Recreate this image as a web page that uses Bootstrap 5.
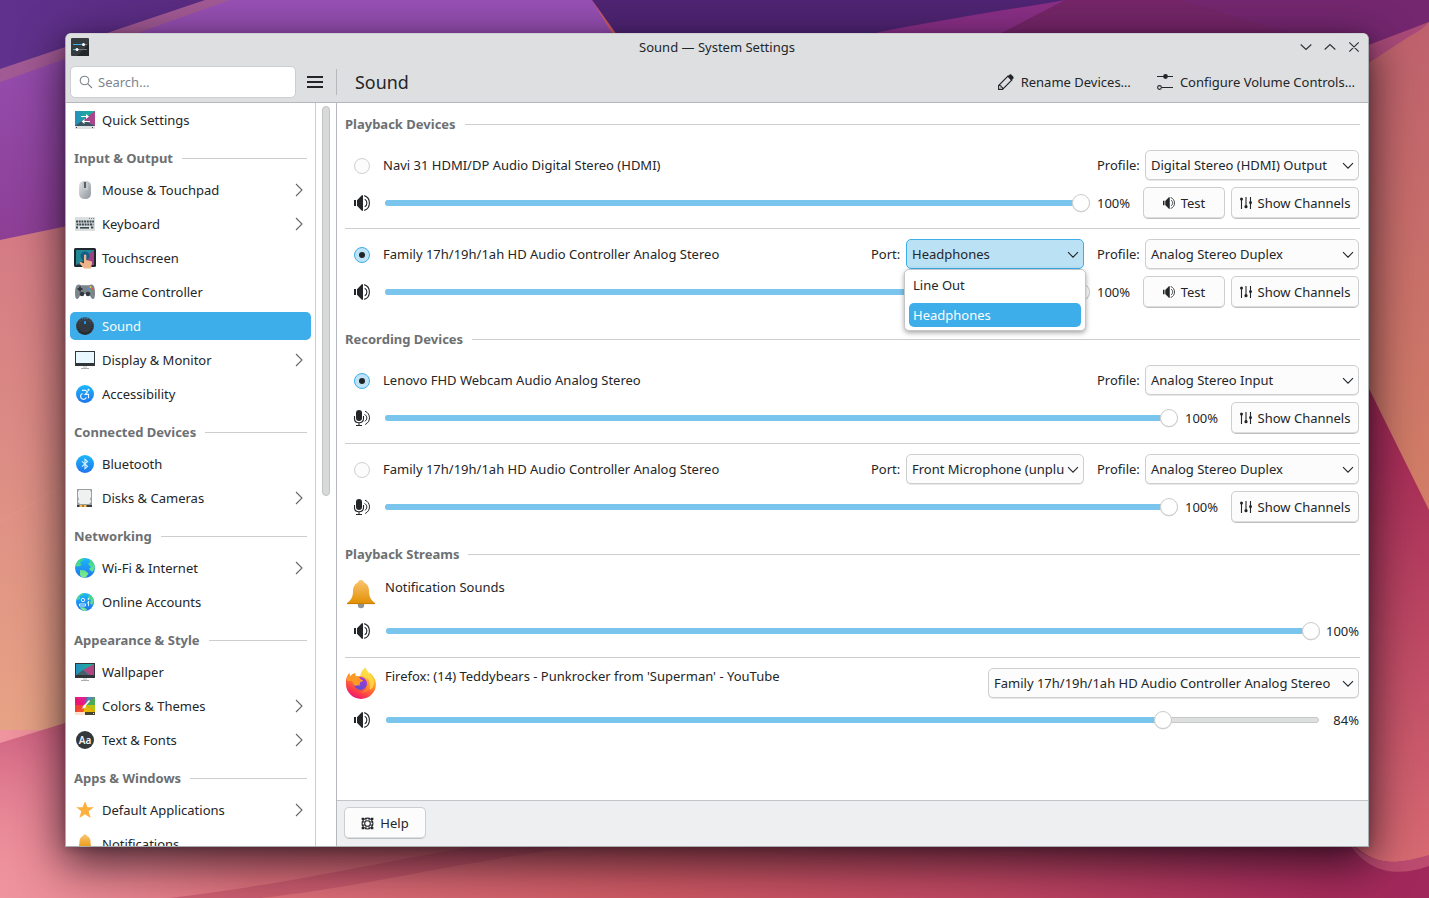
<!DOCTYPE html>
<html lang="en">
<head>
<meta charset="utf-8">
<title>Sound — System Settings</title>
<meta name="viewport" content="width=device-width, initial-scale=1">
<link href="https://cdn.jsdelivr.net/npm/bootstrap@5.3.0/dist/css/bootstrap.min.css" rel="stylesheet">
<style>
  html, body { height: 100%; }
  body { font-family: "Noto Sans", sans-serif; font-size: 13px; line-height: 18px; color: #232629; overflow: hidden; background: #b5506a; }
  svg { display: block; flex: none; }
  .wallpaper { position: absolute; inset: 0; width: 1429px; height: 898px; }
  .desktop { padding: 33px 0 0 65px; }
  .app-window { position: relative; width: 1304px; height: 814px; border: 1px solid #a9acb0; border-top-color: #cfd0d3; border-radius: 6px 6px 0 0; background: #fff; box-shadow: 0 14px 44px 2px rgba(10,4,14,.72), 0 2px 8px rgba(10,4,14,.2); }
  .title-bar { height: 27px; position: relative; padding-bottom: 1px; }
  .window-head { background: #dedfe1; border-bottom: 1px solid #b4b7bb; border-radius: 5px 5px 0 0; height: 69px; }
  .tool-bar { height: 41px; }
  .search-box { width: 226px; height: 32px; background: #fff; border: 1px solid #cdced0; border-radius: 5px; padding-left: 8px; gap: 5px; color: #7b8690; }
  .head-sep { width: 1px; height: 26px; background: #b6b9bd; margin-left: 13px; }
  .page-title { font-size: 17.9px; line-height: 26px; margin-left: 18px; }
  .tool-actions { padding-right: 13px; gap: 26px; }
  .tool-action { gap: 7px; }
  .side-list { width: 250px; height: 743px; border-right: 1px solid #cbcccf; overflow: hidden; padding: 0 4px; }
  .side-item { height: 28px; margin: 3px 0; padding: 0 8px 0 4px; border-radius: 5px; gap: 6px; flex: none; }
  .side-item.active { background: #3daee9; color: #fcfcfc; }
  .side-head { height: 36px; padding: 6px 4px 0; gap: 9px; flex: none; }
  .head-text { font-weight: 700; color: #6d7072; }
  .rule { height: 1px; background: #cbcdd0; flex: 1 1 0; }
  .scroll-lane { width: 21px; border-right: 1px solid #b4b7bb; padding: 3px 0 0 6px; }
  .scroll-thumb { width: 8px; height: 390px; border-radius: 4px; background: #d8dad9; border: 1px solid #c1c3c3; }
  .page-body { height: 697px; padding: 0 8px; }
  .page-foot { height: 46px; border-top: 1px solid #c3c5c8; background: #eeeff1; padding: 6px 7px; }
  .sect-head { height: 42px; gap: 9px; }
  .dev-group { padding: 5px 0 10px; }
  .dev-row { height: 30px; padding-right: 1px; }
  .vol-row { height: 32px; margin-top: 7px; padding-right: 1px; }
  .dev-sep { height: 1px; background: #cbcdd0; margin: 9px 0 10px; }
  .btn-k { --bs-btn-padding-x: 0; --bs-btn-padding-y: 0; --bs-btn-font-size: 13px; --bs-btn-line-height: 18px; --bs-btn-color: #232629; --bs-btn-bg: #fcfcfc; --bs-btn-border-color: #cdcecf; --bs-btn-border-radius: 5px; height: 32px; border-bottom-color: #bfc0c2; box-shadow: inset 0 -1px 0 #dcddde; display: flex; align-items: center; justify-content: center; gap: 6px; }
  .combo { height: 30px; box-shadow: 0 1px 0 #e6e7e8; border-bottom-color: #cdcecf; padding: 0 4px 0 5px; gap: 0; text-align: left; }
  .combo .combo-text { flex: 1 1 0; white-space: nowrap; }
  .combo svg { margin-top: 1px; }
  .combo.open { background: #bbe1f5; border-color: #3daee9; box-shadow: none; }
  .w-profile { width: 214px; } .w-port { width: 178px; } .w-target { width: 371px; }
  .w-test { width: 82px; } .w-chan { width: 128px; }
  .lbl-port { width: 35px; } .lbl-profile { width: 48px; }
  .w-port + .lbl-profile, .port-wrap + .lbl-profile { margin-left: 13px; }
  .radio-k { width: 16px; height: 16px; border-radius: 50%; border: 1px solid #cfd0d1; background: #fcfcfc; margin: 1px 13px 0 9px; flex: none; display: flex; align-items: center; justify-content: center; }
  .radio-k.on { border-color: #3daee9; background: #bfe3f6; }
  .radio-k.on::after { content: ""; width: 6px; height: 6px; border-radius: 50%; background: #1f2427; }
  .slider { height: 18px; position: relative; display: flex; align-items: center; flex: 1 1 0; }
  .slider .groove { height: 6px; width: 100%; border-radius: 3px; background: #dedfdf; border: 1px solid #c6c7c8; }
  .slider .filled { position: absolute; left: 0; top: 6px; height: 6px; border-radius: 3px; background: #7ac5ee; }
  .slider .knob { position: absolute; top: 0; width: 18px; height: 18px; margin-left: -9px; border-radius: 50%; background: #fff; border: 1px solid #cacbcc; box-shadow: 0 .5px 0 #dcdcdc; }
  .vol-icon { margin: 0 15px 0 9px; }
  .stream-vol .vol-icon { margin-right: 16px; }
  .pct { width: 46px; margin-left: 7px; }
  .stream-vol .pct { width: 33px; text-align: right; white-space: nowrap; }
  .w-test + .w-chan { margin-left: 6px; }
  .port-wrap { position: relative; }
  .port-menu { position: absolute; left: -2px; top: 30px; width: 182px; height: 62px; z-index: 5; background: #fff; border: 1px solid #c4c7c9; border-radius: 5px; box-shadow: 0 2px 5px rgba(0,0,0,.35); }
  .port-item { height: 24px; margin: 3px 4px; padding: 0 4px; border-radius: 5px; line-height: 24px; }
  .port-item + .port-item { margin-top: 6px; }
  .port-item.active { background: #3daee9; color: #fcfcfc; }
  .stream-group { padding-top: 3px; }
  .stream-row { height: 32px; padding-right: 1px; gap: 8px; }
  .stream-row .combo { margin-top: 1px; }
  .stream-vol { height: 24px; margin-top: 9px; padding-right: 1px; }
  .stream-group .dev-sep { margin: 14px 0 9px; }
</style>
</head>
<body>
<svg width="0" height="0" class="position-absolute">
  <defs>
    <symbol id="arrow-down" viewBox="0 0 12 8"><path d="M1 1.200 6 6.200l5-5" fill="none" stroke="currentColor" stroke-width="1.100"/></symbol>
    <symbol id="arrow-right" viewBox="0 0 8 14"><path d="M1 1l6 6-6 6" fill="none" stroke="#62666a" stroke-width="1.100"/></symbol>
    <symbol id="speaker" viewBox="0 0 16 16"><path d="M0 5h2v6H0zM3 5.200 7.800.3H9v15.400H7.800L3 10.800z" fill="#232629"/><path d="M10.200.6c3 .9 5.200 4 5.200 7.400s-2.200 6.500-5.200 7.400M10.700 4.300c1.600.8 2.200 2.200 2.200 3.700s-.6 2.900-2.200 3.700" fill="none" stroke="#232629" stroke-width="1.100"/></symbol>
    <symbol id="mic" viewBox="0 0 16 16"><rect x="2" y="0" width="6" height="11" rx="3" fill="#232629"/><path d="M.5 6v2.500c0 2.500 1.900 4.200 4.500 4.200s4.500-1.700 4.500-4.200V6M5 12.500V15M2 15.500h6" fill="none" stroke="#232629" stroke-width="1.100"/><path d="M11 1.200c2.800 1 4.500 3.800 4.500 6.600s-1.600 5.400-4.300 6.700M10.500 4.500c1.500.7 2.300 1.900 2.300 3.400s-.7 2.700-2 3.400" fill="none" stroke="#232629" stroke-width="1"/></symbol>
    <symbol id="channels" viewBox="0 0 12 12"><path d="M1.500 1v11M6 0v11M10.500 0v12" stroke="#232629" stroke-width="1.100"/><circle cx="1.500" cy="2" r="1.500" fill="#232629"/><circle cx="6" cy="9.700" r="1.600" fill="#232629"/><circle cx="10.500" cy="5.500" r="1.500" fill="#232629"/></symbol>
    <linearGradient id="g-gold" x1="0" y1="0" x2="0" y2="1"><stop offset="0" stop-color="#fdc470"/><stop offset="1" stop-color="#e08f00"/></linearGradient>
    <linearGradient id="g-blue" x1="0" y1="0" x2="0" y2="1"><stop offset="0" stop-color="#1cb8fb"/><stop offset="1" stop-color="#1f74ec"/></linearGradient>
    <linearGradient id="g-green" x1="0" y1="0" x2="0" y2="1"><stop offset="0" stop-color="#37d28d"/><stop offset="1" stop-color="#83ea8d"/></linearGradient>
    <linearGradient id="g-grey" x1="0" y1="0" x2="1" y2="1"><stop offset="0" stop-color="#e3e5e7"/><stop offset="1" stop-color="#8d949b"/></linearGradient>
    <linearGradient id="g-dark" x1="0" y1="0" x2="0" y2="1"><stop offset="0" stop-color="#4a525a"/><stop offset="1" stop-color="#272c31"/></linearGradient>
    <linearGradient id="g-teal" x1="0" y1="0" x2="1" y2="0"><stop offset="0" stop-color="#2490bd"/><stop offset="1" stop-color="#1bb68f"/></linearGradient>
    <linearGradient id="g-fox" x1=".8" y1="0" x2=".3" y2="1"><stop offset="0" stop-color="#ffe94f"/><stop offset=".3" stop-color="#ffb62f"/><stop offset=".6" stop-color="#ff6a35"/><stop offset=".85" stop-color="#fb2f52"/><stop offset="1" stop-color="#e31587"/></linearGradient>
    <linearGradient id="g-foxin" x1=".7" y1="0" x2=".3" y2="1"><stop offset="0" stop-color="#a636dd"/><stop offset="1" stop-color="#5a4fd0"/></linearGradient>
    <symbol id="bell" viewBox="0 0 32 32"><circle cx="16" cy="27" r="3.200" fill="#8e9399"/><path d="M16 2c-1.700 0-3 1-3 2.400C9.600 5.800 8 9 8 12.500 8 19.500 6 22 2 25v1h28v-1c-4-3-6-5.500-6-12.500 0-3.500-1.600-6.700-5-8.100C19 3 17.700 2 16 2z" fill="url(#g-gold)"/><path d="M2 25.200h28v.9H2z" fill="#c77a00"/></symbol>
    <linearGradient id="w-tl" x1="0" y1="0" x2="1" y2="0"><stop offset="0" stop-color="#61328d"/><stop offset="1" stop-color="#57297f"/></linearGradient>
    <linearGradient id="w-lp" x1="0" y1="0" x2="0" y2="1"><stop offset="0" stop-color="#9650b4"/><stop offset="1" stop-color="#8d3f95"/></linearGradient>
    <linearGradient id="w-ls" x1="0" y1="0" x2="0" y2="1"><stop offset="0" stop-color="#d37984"/><stop offset="1" stop-color="#e7a385"/></linearGradient>
    <linearGradient id="w-rs" x1="0" y1="0" x2="0" y2="1"><stop offset="0" stop-color="#bf616d"/><stop offset="1" stop-color="#d37f66"/></linearGradient>
    <linearGradient id="w-rm" x1="0" y1="0" x2="0" y2="1"><stop offset="0" stop-color="#9c2450"/><stop offset=".25" stop-color="#a82e58"/><stop offset="1" stop-color="#d76a72"/></linearGradient>
    <linearGradient id="w-bt" x1="0" y1="0" x2="1" y2="0"><stop offset="0" stop-color="#ef959f"/><stop offset=".18" stop-color="#dc707b"/><stop offset=".45" stop-color="#cd5963"/><stop offset=".7" stop-color="#bd4561"/><stop offset=".93" stop-color="#a52b5a"/><stop offset="1" stop-color="#a0285a"/></linearGradient>
    <linearGradient id="w-lb" x1="0" y1="0" x2="0" y2="1"><stop offset="0" stop-color="#c8567a"/><stop offset="1" stop-color="#e88796" stop-opacity="0"/></linearGradient>
  </defs>
</svg>

<!-- Desktop wallpaper -->
<svg class="wallpaper" viewBox="0 0 1429 898" preserveAspectRatio="none">
  <rect width="1429" height="898" fill="url(#w-bt)"/>
  <path d="M0 0H230L0 85z" fill="url(#w-tl)"/>
  <path d="M205 0H420L0 140V69z" fill="#a25a94"/>
  <path d="M230 0H592L640 80 300 240H0V82z" fill="url(#w-lp)"/>
  <path d="M592 0H1130L760 60H635z" fill="#4f2473"/>
  <path d="M870 34C950 18 1020 8 1065 0H1429V60H870z" fill="#8a2f86"/>
  <path d="M1065 0h364v30l-80 30H950z" fill="#752668"/>
  <path d="M1180 0H1429V22L1350 52z" fill="#74276f"/>
  <path d="M0 240 120 215V730H0z" fill="url(#w-ls)"/>
  <path d="M0 522l100-58" stroke="#e9a98c" opacity=".3"/>
  <path d="M0 743l130-40V898H0z" fill="url(#w-lb)"/>
  <path d="M1429 22V520L1340 330V60z" fill="url(#w-rs)"/>
  <path d="M1429 22 1350 52V75L1410 36q15-8 19-14z" fill="#a94a79"/>
  <path d="M1340 330 1429 510V856C1395 864 1378 868 1350 842H1340z" fill="url(#w-rm)"/>
  <path d="M1348 842C1378 868 1395 864 1429 855V866C1400 876 1370 876 1348 842z" fill="#bd4b70"/>
  <path d="M170 898C320 880 420 852 520 840H640C480 855 380 885 260 898z" fill="#b84862" opacity=".5"/>
</svg>

<div class="desktop position-relative">
<div class="app-window">
  <header class="window-head">
    <div class="title-bar d-flex align-items-center justify-content-center">
      <svg class="position-absolute top-0 start-0 mt-1" style="margin-left:5px" width="18" height="18"><rect width="18" height="18" rx="1" fill="#363b40"/><path d="M6 18 18 6v12z" fill="#23272b"/><path d="M2 6.500h10" stroke="#3daee9"/><path d="M12 6.500h4M6 11.500h10" stroke="#777c80"/><path d="M2 11.500h4" stroke="#3daee9"/><circle cx="12.500" cy="6.500" r="1.500" fill="#fff"/><circle cx="6" cy="11.500" r="1.500" fill="#fff"/></svg>
      <span>Sound — System Settings</span>
      <svg class="position-absolute top-0 end-0 me-2" style="margin-top:7px" width="60" height="12" fill="none" stroke="#31363b" stroke-width="1.200"><path d="M.7 3.500 6 8.500l5.300-5M24.700 8.500 30 3.500l5.300 5M49.300 1.300l9.400 9.400M58.700 1.300l-9.400 9.400"/></svg>
    </div>
    <div class="tool-bar d-flex align-items-center ps-1">
      <div class="search-box d-flex align-items-center">
        <svg width="14" height="14" fill="none" stroke="#7b858c" stroke-width="1.100"><circle cx="5.500" cy="5.500" r="4.300"/><path d="M8.700 8.700 13 13"/></svg>
        <span>Search…</span>
      </div>
      <svg style="margin-left:11px" width="16" height="12" fill="#232629"><path d="M0 0h16v2H0zM0 5h16v2H0zM0 10h16v2H0z"/></svg>
      <div class="head-sep"></div>
      <h1 class="page-title fw-normal mb-0">Sound</h1>
      <div class="tool-actions ms-auto d-flex align-items-center">
        <div class="tool-action d-flex align-items-center">
          <svg width="16" height="16" fill="none" stroke="#232629" stroke-width="1.100"><path d="M.6 15.400v-3.900L10 2.100l3.900 3.900-9.400 9.400zM1 11.500q2.500-.3 2.200 1.500 1.600-.2 1.500 2.200"/><path d="M9.500 2.600 11.700.6q.7-.5 1.500 0l2.200 2.200q.5.800 0 1.500l-2 2.200z" fill="#232629" stroke="none"/></svg>
          <span>Rename Devices…</span>
        </div>
        <div class="tool-action d-flex align-items-center">
          <svg width="16" height="16" fill="none" stroke="#232629" stroke-width="1.100"><path d="M0 2.500h16M4.500 13.500H16"/><circle cx="8.500" cy="2.500" r="2.400" fill="#232629" stroke="none"/><circle cx="2.500" cy="13.500" r="1.900"/></svg>
          <span>Configure Volume Controls…</span>
        </div>
      </div>
    </div>
  </header>

  <div class="d-flex">
    <nav class="side-list d-flex flex-column">
      <div class="side-item d-flex align-items-center"><svg width="22" height="22"><rect x="1" y="2" width="20" height="15" fill="url(#g-teal)"/><path d="M21 2v15L9 11z" fill="#a9468c"/><path d="M1 17l8-6 12 6z" fill="#3c5560"/><path d="M1 17h20v3H1z" fill="#dfe2e3"/><path d="M2 18h1v1H2zM18 18h1v1h-1z" fill="#444"/><path d="M7 7.500h6M10 12.500h6" stroke="#fff"/><path d="M12 5l3 2.500L12 10zM10.500 10l-3 2.500 3 2.500z" fill="#fff"/></svg>Quick Settings</div>

      <div class="side-head d-flex align-items-center"><span class="head-text">Input &amp; Output</span><span class="rule"></span></div>
      <div class="side-item d-flex align-items-center"><svg width="22" height="22"><path d="M5 7q0-5 6-5t6 5v7q0 6-6 6t-6-6z" fill="url(#g-grey)"/><path d="M8 3q3-1 6 0v8H8z" fill="#c5c9cc"/><rect x="10" y="3" width="2" height="6" fill="#556069"/></svg>Mouse &amp; Touchpad<svg class="ms-auto" width="8" height="14"><use href="#arrow-right"/></svg></div>
      <div class="side-item d-flex align-items-center"><svg width="22" height="22"><rect x="1" y="4" width="20" height="14" fill="#dcdfe0"/><path d="M15 5.500h5" stroke="#27ae78" stroke-dasharray="1 1"/><path d="M2 8.500h18M2.500 11.500h17M2 14.500h2M17 14.500h3" stroke="#39474e" stroke-width="2" stroke-dasharray="2 .7"/><path d="M6 14.800h9" stroke="#39474e" stroke-width="1.600"/></svg>Keyboard<svg class="ms-auto" width="8" height="14"><use href="#arrow-right"/></svg></div>
      <div class="side-item d-flex align-items-center"><svg width="22" height="22"><rect x="0" y="1" width="22" height="19" rx="1.500" fill="#21272f"/><rect x="2" y="3" width="18" height="15" fill="#218a96"/><path d="M20 3v15h-7V9z" fill="#a04084"/><circle cx="11" cy="9" r="4.500" fill="#175c86"/><path d="M2 18l8-5v5z" fill="#2c4550"/><path d="M10 8q1.300-1.200 2.300 0v5l5 1.300q1 .4.700 2L17 21.500H10L5.300 16q.8-1.500 2.200-.8l2.500 1.300z" fill="#eeb48a"/></svg>Touchscreen</div>
      <div class="side-item d-flex align-items-center"><svg width="22" height="22"><path d="M3 4q2-1.300 4 .3h8q2-1.600 4-.3 2 2 2 8t-2 6q-2 0-3.500-5h-9Q5 18 3 18q-2 0-2-6t2-8z" fill="#7c858c"/><circle cx="8" cy="13" r="2.300" fill="#343a41"/><circle cx="14" cy="13" r="2.300" fill="#343a41"/><path d="M3.500 8h5M6 5.500v5" stroke="#31373d" stroke-width="1.800"/><circle cx="16.500" cy="6" r="1" fill="#edc54c"/><circle cx="14.700" cy="8" r="1" fill="#548fda"/><circle cx="18.300" cy="8" r="1" fill="#dc5560"/><circle cx="16.500" cy="10" r="1" fill="#5cb070"/></svg>Game Controller</div>
      <div class="side-item active d-flex align-items-center"><svg width="22" height="22"><circle cx="11" cy="11" r="9" fill="url(#g-dark)"/><circle cx="11" cy="11" r="7.300" fill="none" stroke="#171b1f" stroke-dasharray="1 1.300"/><circle cx="11" cy="11" r="6" fill="#343a41"/><path d="M10 6h2v3h-2z" fill="#1d99f3"/><path d="M8 3.700q3-1.200 6 0" stroke="#1d99f3" fill="none" stroke-dasharray="1.300 1"/></svg>Sound</div>
      <div class="side-item d-flex align-items-center"><svg width="22" height="22"><path d="M1 2h20v15H1z" fill="#31363b"/><path d="M2 3h18v11H2z" fill="#e9f8fe"/><path d="M9 17h4v2H9z" fill="#d8dcde"/><path d="M7 19h8v1H7z" fill="#a8adb1"/></svg>Display &amp; Monitor<svg class="ms-auto" width="8" height="14"><use href="#arrow-right"/></svg></div>
      <div class="side-item d-flex align-items-center"><svg width="22" height="22"><circle cx="11" cy="11" r="9" fill="url(#g-blue)"/><g fill="none" stroke="#e8f6ff" stroke-width="1.200"><path d="M8 7.300h3.500l2 1.500-2.300 2.500h3.300v4M8.500 10.500a3 3 0 1 0 3.800 4"/></g><circle cx="14.500" cy="6.800" r="1.100" fill="#e8f6ff"/></svg>Accessibility</div>

      <div class="side-head d-flex align-items-center"><span class="head-text">Connected Devices</span><span class="rule"></span></div>
      <div class="side-item d-flex align-items-center"><svg width="22" height="22"><circle cx="11" cy="11" r="9" fill="url(#g-blue)"/><path d="M8 8.300l5.500 5L11 15.700V6.200l2.500 2.300L8 13.600" fill="none" stroke="#d8f0ff" stroke-width="1.100"/></svg>Bluetooth</div>
      <div class="side-item d-flex align-items-center"><svg width="22" height="22"><rect x="3" y="2" width="15" height="18" fill="#9a9fa2"/><path d="M5 3h11l1 2v5l-1 2 1 2v1l-2 2H6l-2-2v-1l1-2-1-2V5z" fill="#eff1f1"/><path d="M3 18h15v2H3z" fill="#3a4042"/><path d="M5.500 19h8" stroke="#fdbc4b" stroke-width="2" stroke-dasharray="3 1"/></svg>Disks &amp; Cameras<svg class="ms-auto" width="8" height="14"><use href="#arrow-right"/></svg></div>

      <div class="side-head d-flex align-items-center"><span class="head-text">Networking</span><span class="rule"></span></div>
      <div class="side-item d-flex align-items-center"><svg width="22" height="22"><circle cx="11" cy="11" r="10" fill="url(#g-blue)"/><path d="M1.200 9Q3 2 9 1.200l1 1.300-4 3 1.500 2.500-3 1.500zM15 2q5 2 6 8-1 4-3 5l-3-3 2-2-3-3 2-2zM6 13l5 .5 3.500 3-3 4.300Q7 20.500 6 18z" fill="url(#g-green)"/></svg>Wi-Fi &amp; Internet<svg class="ms-auto" width="8" height="14"><use href="#arrow-right"/></svg></div>
      <div class="side-item d-flex align-items-center"><svg width="22" height="22"><circle cx="11" cy="11" r="9" fill="url(#g-blue)"/><path d="M3 7Q6 2 10 2.200L9 4 6 5v3l-3 1zM15 3q4 2 5 7l-2 4-2-2 1-3-3-2zM6 16l4 .5 3 2-2 1.500q-4-.5-5-4z" fill="url(#g-green)"/><g fill="none" stroke="#d6f1ff"><circle cx="9" cy="9" r="1.700"/><path d="M5.500 15v-2h6v2zM14.500 10v5M13 12h2"/></g><circle cx="14.500" cy="8" r=".9" fill="#d6f1ff"/></svg>Online Accounts</div>

      <div class="side-head d-flex align-items-center"><span class="head-text">Appearance &amp; Style</span><span class="rule"></span></div>
      <div class="side-item d-flex align-items-center"><svg width="22" height="22"><path d="M1 2h20v15H1z" fill="#31363b"/><path d="M2 3h18v11H2z" fill="url(#g-teal)"/><path d="M20 3v11h-5L9 9z" fill="#b04583"/><path d="M2 14l7-5 6 5z" fill="#44606a"/><path d="M9 17h4v2H9z" fill="#d8dcde"/><path d="M7 19h8v1H7z" fill="#a8adb1"/></svg>Wallpaper</div>
      <div class="side-item d-flex align-items-center"><svg width="22" height="22"><rect x="1" y="2" width="20" height="15" fill="#ef4136"/><path d="M11 10 1 2v8z" fill="#ec1278"/><path d="M11 10 1 2h10z" fill="#e01e8c"/><path d="M11 10V2h10z" fill="#4c8fb2"/><path d="M11 2h3l-3 8z" fill="#7a52a8"/><path d="M11 10 21 2v8z" fill="#4dab58"/><path d="M11 10h10v7z" fill="#b8c412"/><path d="M11 10l10 7H9z" fill="#e6b800"/><path d="M11 10 9 17H1z" fill="#f4512c"/><path d="M1 17h10v3H1z" fill="#fbe3cf"/><path d="M11 17h10v3H11z" fill="#46452f"/><path d="M2 18h1v1H2zM19 18h1v1h-1z" fill="#ddd"/><path d="M15 5l1 1-4.500 5-1-1z" fill="#fff"/><path d="M10.500 9.500l1.800 1.800Q11 14 8 13.500q1-1 .8-2.200z" fill="#fff"/></svg>Colors &amp; Themes<svg class="ms-auto" width="8" height="14"><use href="#arrow-right"/></svg></div>
      <div class="side-item d-flex align-items-center"><svg width="22" height="22"><circle cx="11" cy="11" r="9" fill="#33383d"/><text x="11" y="14.500" text-anchor="middle" font-size="10" font-weight="600" fill="#f0f1f2">Aa</text></svg>Text &amp; Fonts<svg class="ms-auto" width="8" height="14"><use href="#arrow-right"/></svg></div>

      <div class="side-head d-flex align-items-center"><span class="head-text">Apps &amp; Windows</span><span class="rule"></span></div>
      <div class="side-item d-flex align-items-center"><svg width="22" height="22"><path d="M11 2.200l2.500 6h6.200l-5 4.100 1.900 6.700-5.600-3.800L5.400 19l1.900-6.700-5-4.100h6.200z" fill="#fdb03e"/></svg>Default Applications<svg class="ms-auto" width="8" height="14"><use href="#arrow-right"/></svg></div>
      <div class="side-item d-flex align-items-center"><svg width="22" height="22"><use href="#bell" width="22" height="22"/></svg>Notifications</div>
    </nav>
    <div class="scroll-lane"><div class="scroll-thumb"></div></div>

    <main class="flex-grow-1">
      <div class="page-body">
        <div class="sect-head d-flex align-items-center"><span class="head-text">Playback Devices</span><span class="rule"></span></div>
        <section class="dev-group">
          <div class="dev-row d-flex align-items-center">
            <span class="radio-k"></span><span>Navi 31 HDMI/DP Audio Digital Stereo (HDMI)</span>
            <span class="ms-auto lbl-profile">Profile:</span>
            <button class="btn btn-k combo w-profile"><span class="combo-text">Digital Stereo (HDMI) Output</span><svg width="12" height="8"><use href="#arrow-down"/></svg></button>
          </div>
          <div class="vol-row d-flex align-items-center">
            <svg class="vol-icon" width="16" height="16"><use href="#speaker"/></svg>
            <div class="slider"><div class="groove"></div><div class="filled" style="width:696px"></div><div class="knob" style="left:696px"></div></div>
            <span class="pct">100%</span>
            <button class="btn btn-k w-test"><svg width="12" height="12"><use href="#speaker"/></svg><span>Test</span></button>
            <button class="btn btn-k w-chan"><svg width="12" height="12"><use href="#channels"/></svg><span>Show Channels</span></button>
          </div>
          <div class="dev-sep"></div>
          <div class="dev-row d-flex align-items-center">
            <span class="radio-k on"></span><span>Family 17h/19h/1ah HD Audio Controller Analog Stereo</span>
            <span class="ms-auto lbl-port">Port:</span>
            <div class="port-wrap">
              <button class="btn btn-k combo open w-port"><span class="combo-text">Headphones</span><svg width="12" height="8"><use href="#arrow-down"/></svg></button>
              <div class="port-menu"><div class="port-item">Line Out</div><div class="port-item active">Headphones</div></div>
            </div>
            <span class="lbl-profile">Profile:</span>
            <button class="btn btn-k combo w-profile"><span class="combo-text">Analog Stereo Duplex</span><svg width="12" height="8"><use href="#arrow-down"/></svg></button>
          </div>
          <div class="vol-row d-flex align-items-center">
            <svg class="vol-icon" width="16" height="16"><use href="#speaker"/></svg>
            <div class="slider"><div class="groove"></div><div class="filled" style="width:696px"></div><div class="knob" style="left:696px"></div></div>
            <span class="pct">100%</span>
            <button class="btn btn-k w-test"><svg width="12" height="12"><use href="#speaker"/></svg><span>Test</span></button>
            <button class="btn btn-k w-chan"><svg width="12" height="12"><use href="#channels"/></svg><span>Show Channels</span></button>
          </div>
        </section>

        <div class="sect-head d-flex align-items-center"><span class="head-text">Recording Devices</span><span class="rule"></span></div>
        <section class="dev-group">
          <div class="dev-row d-flex align-items-center">
            <span class="radio-k on"></span><span>Lenovo FHD Webcam Audio Analog Stereo</span>
            <span class="ms-auto lbl-profile">Profile:</span>
            <button class="btn btn-k combo w-profile"><span class="combo-text">Analog Stereo Input</span><svg width="12" height="8"><use href="#arrow-down"/></svg></button>
          </div>
          <div class="vol-row d-flex align-items-center">
            <svg class="vol-icon" width="16" height="16"><use href="#mic"/></svg>
            <div class="slider"><div class="groove"></div><div class="filled" style="width:784px"></div><div class="knob" style="left:784px"></div></div>
            <span class="pct">100%</span>
            <button class="btn btn-k w-chan"><svg width="12" height="12"><use href="#channels"/></svg><span>Show Channels</span></button>
          </div>
          <div class="dev-sep"></div>
          <div class="dev-row d-flex align-items-center">
            <span class="radio-k"></span><span>Family 17h/19h/1ah HD Audio Controller Analog Stereo</span>
            <span class="ms-auto lbl-port">Port:</span>
            <button class="btn btn-k combo w-port"><span class="combo-text">Front Microphone (unplu</span><svg width="12" height="8"><use href="#arrow-down"/></svg></button>
            <span class="lbl-profile">Profile:</span>
            <button class="btn btn-k combo w-profile"><span class="combo-text">Analog Stereo Duplex</span><svg width="12" height="8"><use href="#arrow-down"/></svg></button>
          </div>
          <div class="vol-row d-flex align-items-center">
            <svg class="vol-icon" width="16" height="16"><use href="#mic"/></svg>
            <div class="slider"><div class="groove"></div><div class="filled" style="width:784px"></div><div class="knob" style="left:784px"></div></div>
            <span class="pct">100%</span>
            <button class="btn btn-k w-chan"><svg width="12" height="12"><use href="#channels"/></svg><span>Show Channels</span></button>
          </div>
        </section>

        <div class="sect-head d-flex align-items-center"><span class="head-text">Playback Streams</span><span class="rule"></span></div>
        <section class="stream-group">
          <div class="stream-row d-flex align-items-start">
            <svg width="32" height="32"><use href="#bell"/></svg><span>Notification Sounds</span>
          </div>
          <div class="stream-vol d-flex align-items-center">
            <svg class="vol-icon" width="16" height="16"><use href="#speaker"/></svg>
            <div class="slider"><div class="groove"></div><div class="filled" style="width:925px"></div><div class="knob" style="left:925px"></div></div>
            <span class="pct">100%</span>
          </div>
          <div class="dev-sep"></div>
          <div class="stream-row d-flex align-items-start">
            <svg width="32" height="32"><path d="M1 17Q.5 10 4.300 6q.2 2.500 1.200 3.200Q7 7 10.300 6q-.6 2 .7 3.200L15.500 9Q15.700 4.500 20.500.5q.5 3 2.500 4.700l1.500 2q.3-1 0-2Q31 11 31 17a15 15 0 0 1-30 0z" fill="url(#g-fox)"/><path d="M15.500 9Q15.700 4.500 20.500.5q.5 3 3 5.200 5.500 5 5.500 11-1 5.500-4.500 6 1-6-2-10-3-3.500-7-3.700z" fill="#ffe24a" opacity=".75"/><path d="M22 10q5 6 1 13-3.500 3-7 2.500 8-2 7-9.500z" fill="#ff9a30" opacity=".7"/><circle cx="15.500" cy="16.500" r="6.500" fill="url(#g-foxin)"/><path d="M4.300 6q.2 2.500 1.200 3.200Q7 7 10.300 6q-.6 2 .7 3.200 2.500 0 4 2l1 1.300q2.700.3 2 1.200-1.300 1.300-3 1.500-1 2.200.5 3.300-3.500-.5-5 .5Q7.500 17 7 14l-5 0q0-5 2.300-8z" fill="#ff9a26"/></svg>
            <span>Firefox: (14) Teddybears - Punkrocker from 'Superman' - YouTube</span>
            <button class="btn btn-k combo w-target ms-auto"><span class="combo-text">Family 17h/19h/1ah HD Audio Controller Analog Stereo</span><svg width="12" height="8"><use href="#arrow-down"/></svg></button>
          </div>
          <div class="stream-vol d-flex align-items-center">
            <svg class="vol-icon" width="16" height="16"><use href="#speaker"/></svg>
            <div class="slider"><div class="groove"></div><div class="filled" style="width:777px"></div><div class="knob" style="left:777px"></div></div>
            <span class="pct">84%</span>
          </div>
        </section>
      </div>
      <footer class="page-foot d-flex">
        <button class="btn btn-k w-test"><svg width="13" height="13" viewBox="0 0 12 12" fill="none" stroke="#232629"><circle cx="6" cy="6" r="5" stroke-width="1"/><circle cx="6" cy="6" r="2.600"/><path d="M4.500.8v2.500M7.500.8v2.500M4.500 8.700v2.500M7.500 8.700v2.500M.8 4.500h2.500M.8 7.500h2.500M8.700 4.500h2.500M8.700 7.500h2.500"/><path d="M.6.600h2.200v2.200H.6zM9.200.600h2.200v2.200H9.200zM.6 9.200h2.200v2.200H.6zM9.200 9.200h2.200v2.200H9.200z" fill="#232629" stroke="none"/></svg><span>Help</span></button>
      </footer>
    </main>
  </div>
</div>
</div>
<script src="https://cdn.jsdelivr.net/npm/bootstrap@5.3.0/dist/js/bootstrap.bundle.min.js"></script>
</body>
</html>
